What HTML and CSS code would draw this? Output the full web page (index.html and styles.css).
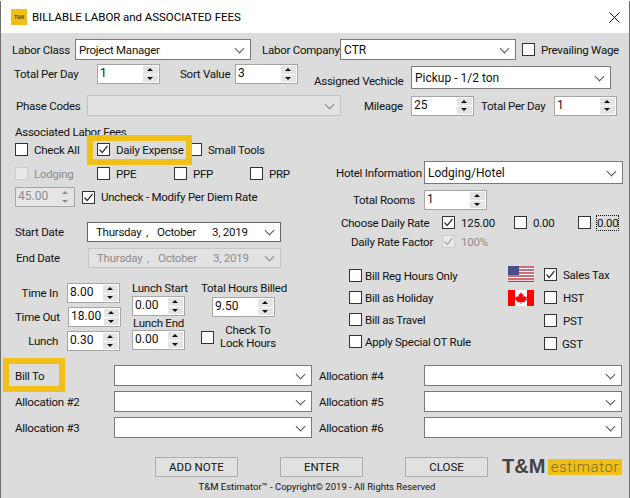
FILE: index.html
```html
<!DOCTYPE html>
<html lang="en">
<head>
    <meta charset="UTF-8">
    <title>Billable Labor and Associated Fees</title>
    <link rel="stylesheet" href="styles.css">
</head>
<body>
<div class="win">
    <header class="titlebar">
        <div class="app-icon">T&amp;M</div>
        <div class="title">BILLABLE LABOR and ASSOCIATED FEES</div>
        <svg class="close" width="11" height="11" viewBox="0 0 11 11"><path d="M0.5 0.5L10.5 10.5M10.5 0.5L0.5 10.5" stroke="#111" stroke-width="1" fill="none"/></svg>
    </header>

    <div class="row r1">
        <label class="lbl w-class">Labor Class</label>
        <div class="drop w-176"><span>Project Manager</span></div>
        <label class="lbl w-company">Labor Company</label>
        <div class="drop w-176 big"><span>CTR</span></div>
        <span class="chk ml-6"></span>
        <label class="lbl ml-6">Prevailing Wage</label>
    </div>

    <div class="row r2">
        <label class="lbl w-perday">Total Per Day</label>
        <div class="spin w-63"><span>1</span><i class="btns"><b></b><b></b></i></div>
        <label class="lbl w-sort">Sort Value</label>
        <div class="spin w-63"><span>3</span><i class="btns"><b></b><b></b></i></div>
        <label class="lbl w-vehicle">Assigned Vechicle</label>
        <div class="drop w-200 big tall"><span>Pickup - 1/2 ton</span></div>
    </div>

    <div class="row r3">
        <label class="lbl w-phase">Phase Codes</label>
        <div class="drop w-254 off"></div>
        <label class="lbl w-mileage">Mileage</label>
        <div class="spin w-63"><span>25</span><i class="btns"><b></b><b></b></i></div>
        <label class="lbl w-perday2">Total Per Day</label>
        <div class="spin w-63"><span>1</span><i class="btns"><b></b><b></b></i></div>
    </div>

    <div class="mid">
        <div class="left">
            <div class="fees-title">Associated Labor Fees</div>
            <div class="row fees-row">
                <span class="chk"></span>
                <label class="lbl w-checkall">Check All</label>
                <span class="chk on"></span>
                <label class="lbl w-daily">Daily Expense</label>
                <span class="chk"></span>
                <label class="lbl ml-6">Small Tools</label>
                <div class="mark mark-daily"></div>
            </div>
            <div class="row codes-row">
                <span class="chk faint"></span>
                <label class="lbl w-lodging muted">Lodging</label>
                <span class="chk"></span>
                <label class="lbl w-ppe">PPE</label>
                <span class="chk"></span>
                <label class="lbl w-pfp">PFP</label>
                <span class="chk"></span>
                <label class="lbl ml-6">PRP</label>
            </div>
            <div class="row diem-row">
                <div class="spin w-60 off"><span>45.00</span><i class="btns"><b></b><b></b></i></div>
                <span class="chk on ml-7"></span>
                <label class="lbl ml-6">Uncheck - Modify Per Diem Rate</label>
            </div>
            <div class="row start-row">
                <label class="lbl w-date">Start Date</label>
                <div class="drop date"><span class="d-week">Thursday</span><span class="d-comma">,</span><span class="d-month">October</span><span>3, 2019</span></div>
            </div>
            <div class="row end-row">
                <label class="lbl w-date2">End Date</label>
                <div class="drop date off"><span class="d-week">Thursday</span><span class="d-comma">,</span><span class="d-month">October</span><span>3, 2019</span></div>
            </div>

            <div class="times">
                <div class="t-col1">
                    <div class="row t-row"><label class="lbl t-in">Time In</label><div class="spin w-53"><span>8.00</span><i class="btns"><b></b><b></b></i></div></div>
                    <div class="row t-row"><label class="lbl t-out">Time Out</label><div class="spin w-53"><span>18.00</span><i class="btns"><b></b><b></b></i></div></div>
                    <div class="row t-row"><label class="lbl t-in">Lunch</label><div class="spin w-53"><span>0.30</span><i class="btns"><b></b><b></b></i></div></div>
                </div>
                <div class="t-col2">
                    <div class="lbl t-head">Lunch Start</div>
                    <div class="spin w-53"><span>0.00</span><i class="btns"><b></b><b></b></i></div>
                    <div class="lbl t-head2">Lunch End</div>
                    <div class="spin w-53"><span>0.00</span><i class="btns"><b></b><b></b></i></div>
                </div>
                <div class="t-col3">
                    <div class="lbl t-head">Total Hours Billed</div>
                    <div class="spin w-63 t-total"><span>9.50</span><i class="btns"><b></b><b></b></i></div>
                    <div class="row t-lock">
                        <span class="chk"></span>
                        <label class="lbl lock-text">Check To<br>Lock Hours</label>
                    </div>
                </div>
            </div>
        </div>

        <div class="right">
            <div class="row hotel-row">
                <label class="lbl w-right">Hotel Information</label>
                <div class="drop w-199 big tall"><span>Lodging/Hotel</span></div>
            </div>
            <div class="row rooms-row">
                <label class="lbl w-right">Total Rooms</label>
                <div class="spin w-63"><span>1</span><i class="btns"><b></b><b></b></i></div>
            </div>
            <div class="row rate-row">
                <label class="lbl w-rate">Choose Daily Rate</label>
                <span class="chk on"></span>
                <label class="lbl w-r1">125.00</label>
                <span class="chk"></span>
                <label class="lbl w-r2">0.00</label>
                <span class="chk"></span>
                <label class="lbl focus">0.00</label>
            </div>
            <div class="row factor-row">
                <label class="lbl w-factor">Daily Rate Factor</label>
                <span class="chk on faint"></span>
                <label class="lbl ml-6 muted">100%</label>
            </div>
            <div class="bills">
                <div class="bill-list">
                    <div class="row bill"><span class="chk"></span><label class="lbl ml-3">Bill Reg Hours Only</label></div>
                    <div class="row bill"><span class="chk"></span><label class="lbl ml-3">Bill as Holiday</label></div>
                    <div class="row bill"><span class="chk"></span><label class="lbl ml-3">Bill as Travel</label></div>
                    <div class="row bill"><span class="chk"></span><label class="lbl ml-3">Apply Special OT Rule</label></div>
                </div>
                <div class="flags">
                    <svg width="26" height="16" viewBox="0 0 26 16">
                        <rect width="26" height="16" fill="#fff"/>
                        <path d="M0 1H26M0 4H26M0 7H26M0 10H26M0 13H26M0 15.5H26" stroke="#b4404c" stroke-width="1.4"/>
                        <rect width="11" height="9" fill="#4a4f8c"/>
                    </svg>
                    <svg width="26" height="16" viewBox="0 0 26 16">
                        <rect width="26" height="16" fill="#fff"/>
                        <rect width="7" height="16" fill="#f00"/>
                        <rect x="19" width="7" height="16" fill="#f00"/>
                        <path d="M13 2L14.2 4.4L15.6 3.8L15 7L16.4 5.8L17 7L19 6.8L18.4 8.8L19 9.4L16.4 11.4L16.8 12.4L13.4 12V14H12.6V12L9.2 12.4L9.6 11.4L7 9.4L7.6 8.8L7 6.8L9 7L9.6 5.8L11 7L10.4 3.8L11.8 4.4Z" fill="#f00"/>
                    </svg>
                </div>
                <div class="taxes">
                    <div class="row tax"><span class="chk on"></span><label class="lbl ml-6">Sales Tax</label></div>
                    <div class="row tax"><span class="chk"></span><label class="lbl ml-6">HST</label></div>
                    <div class="row tax"><span class="chk"></span><label class="lbl ml-6">PST</label></div>
                    <div class="row tax"><span class="chk"></span><label class="lbl ml-5">GST</label></div>
                </div>
            </div>
        </div>
    </div>

    <div class="alloc">
        <div class="row"><label class="lbl a-left">Bill To</label><div class="drop w-198"></div><label class="lbl a-right">Allocation #4</label><div class="drop w-198"></div></div>
        <div class="row"><label class="lbl a-left">Allocation #2</label><div class="drop w-198"></div><label class="lbl a-right">Allocation #5</label><div class="drop w-198"></div></div>
        <div class="row"><label class="lbl a-left">Allocation #3</label><div class="drop w-198"></div><label class="lbl a-right">Allocation #6</label><div class="drop w-198"></div></div>
        <div class="mark mark-bill"></div>
    </div>

    <div class="row actions">
        <button class="btn">ADD NOTE</button>
        <button class="btn">ENTER</button>
        <button class="btn">CLOSE</button>
        <div class="logo"><span class="logo-tm">T&amp;M</span><span class="logo-est">estimator</span></div>
    </div>
    <footer class="copy">T&amp;M Estimator&trade; - Copyright&copy; 2019 - All Rights Reserved</footer>
</div>
</body>
</html>
```

FILE: styles.css
```css
* {
    margin: 0;
    padding: 0;
    box-sizing: border-box;
}

body {
    width: 630px;
    height: 498px;
    overflow: hidden;
    font-family: Roboto, "Liberation Sans", sans-serif;
    font-size: 11.5px;
    letter-spacing: -0.25px;
    color: #111;
}

.win {
    position: relative;
    width: 630px;
    height: 498px;
    background-color: #dcdcdc;
    box-shadow: inset 0 0 0 1px #6d6d6d;
}

.titlebar {
    height: 32px;
    margin: 1px 1px 0;
    display: flex;
    align-items: center;
    background-color: #fff;
}

.app-icon {
    width: 16px;
    height: 16px;
    margin-left: 10px;
    background-color: #f0c018;
    color: #6b5a1e;
    font-size: 5px;
    font-weight: 700;
    line-height: 16px;
    text-align: center;
}

.title {
    margin-left: 5px;
    font-size: 11.5px;
    letter-spacing: -0.05px;
    color: #000;
    white-space: nowrap;
}

.close {
    margin-left: auto;
    margin-right: 9px;
}

.row {
    display: flex;
    align-items: center;
}

.lbl {
    flex: none;
    white-space: nowrap;
    line-height: 14px;
}

.muted {
    color: #8d8d8d;
}

/* checkbox */
.chk {
    flex: none;
    width: 13px;
    height: 13px;
    border: 1px solid #333;
    background-color: #fff;
}

.chk.on {
    background: #fff url("data:image/svg+xml,%3Csvg xmlns='http://www.w3.org/2000/svg' width='11' height='11'%3E%3Cpath d='M1.5 5.5L4.2 8.5L9.5 2' stroke='%23333' stroke-width='1.2' fill='none'/%3E%3C/svg%3E") no-repeat center;
}

.chk.faint {
    border-color: #ccc;
    background-color: #e9e9e9;
}

.chk.on.faint {
    background-image: url("data:image/svg+xml,%3Csvg xmlns='http://www.w3.org/2000/svg' width='11' height='11'%3E%3Cpath d='M1.5 5.5L4.2 8.5L9.5 2' stroke='%23aaa' stroke-width='1.2' fill='none'/%3E%3C/svg%3E");
}

/* combo box */
.drop {
    position: relative;
    flex: none;
    height: 21px;
    display: flex;
    align-items: center;
    padding-left: 3px;
    border: 1px solid #7a7a7a;
    background-color: #fff;
}

.drop::after {
    content: "";
    position: absolute;
    right: 7px;
    top: 50%;
    width: 6px;
    height: 6px;
    margin-top: -5px;
    border-right: 1px solid #555;
    border-bottom: 1px solid #555;
    transform: rotate(45deg);
}

.drop.big {
    font-size: 12px;
    letter-spacing: 0;
}

.drop.tall {
    height: 23px;
}

.drop.off {
    border-color: #c4c4c4;
    background-color: #e2e2e2;
    color: #8d8d8d;
}

.drop.off::after {
    border-color: #888;
}

/* number box */
.spin {
    flex: none;
    height: 20px;
    display: flex;
    justify-content: space-between;
    padding: 1px 1px 1px 2px;
    border: 1px solid #a6a6a6;
    background-color: #fff;
    font-size: 12px;
    letter-spacing: 0;
    line-height: 15px;
}

.btns {
    width: 15px;
    display: flex;
    flex-direction: column;
    gap: 1px;
    font-style: normal;
}

.btns b {
    flex: 1;
    position: relative;
    background-color: #e4e4e4;
}

.btns b::after {
    content: "";
    position: absolute;
    left: 4px;
    top: 2px;
    border-left: 3px solid transparent;
    border-right: 3px solid transparent;
    border-bottom: 3px solid #111;
}

.btns b + b::after {
    border-bottom: 0;
    border-top: 3px solid #111;
}

.spin.off {
    background-color: #e6e6e6;
    color: #8d8d8d;
}

.spin.off .btns b::after {
    border-bottom-color: #8d8d8d;
    border-top-color: #8d8d8d;
}

.w-53 { width: 53px; }
.w-60 { width: 60px; }
.w-63 { width: 63px; }
.w-176 { width: 176px; }
.w-198 { width: 198px; }
.w-199 { width: 199px; }
.w-200 { width: 200px; }
.w-254 { width: 254px; }

.ml-3 { margin-left: 3px; }
.ml-5 { margin-left: 5px; }
.ml-6 { margin-left: 6px; }
.ml-7 { margin-left: 7px; }

/* top rows */
.r1 {
    margin-top: 6px;
    padding-left: 12px;
    height: 21px;
}

.w-class { width: 63px; }
.w-company { width: 78px; margin-left: 11px; }

.r2 {
    margin-top: 4px;
    padding-left: 14px;
    height: 25px;
    align-items: flex-start;
}

.r2 .lbl { margin-top: 3px; }
.r2 .drop { margin-top: 2px; }

.w-perday { width: 83px; }
.w-sort { width: 55px; margin-left: 20px; }
.r2 .w-vehicle { width: 97px; margin-left: 16px; margin-top: 10px; }

.r3 {
    margin-top: 6px;
    padding-left: 16px;
    height: 21px;
}

.w-phase { width: 71px; }
.w-mileage { width: 47px; margin-left: 23px; }
.w-perday2 { width: 73px; margin-left: 7px; }

/* middle */
.mid {
    display: flex;
    margin-top: 9px;
}

.left {
    width: 336px;
    padding-left: 15px;
    flex: none;
}

.fees-title {
    height: 14px;
    line-height: 14px;
}

.fees-row {
    position: relative;
    margin-top: 4px;
    height: 13px;
}

.mark {
    position: absolute;
    border: 6px solid #f0c018;
}

.mark-daily {
    left: 72px;
    top: -8px;
    width: 105px;
    height: 30px;
}

.w-checkall { width: 63px; margin-left: 6px; }
.w-daily { width: 73px; margin-left: 6px; }

.codes-row {
    margin-top: 11px;
    height: 13px;
}

.w-lodging { width: 63px; margin-left: 6px; }
.w-ppe { width: 58px; margin-left: 6px; }
.w-pfp { width: 57px; margin-left: 6px; }

.diem-row { margin-top: 7px; }

.start-row { margin-top: 15px; }
.end-row { margin-top: 6px; }

.w-date { width: 72px; }
.w-date2 { width: 73px; padding-left: 1px; }

.date {
    height: 20px;
    width: 194px;
    padding-left: 8px;
    border-color: #666;
}

.end-row .date { width: 193px; }

.d-week { width: 50px; }
.d-comma { width: 11px; }
.d-month { width: 55px; }

.times {
    display: flex;
    margin-top: 13px;
}

.t-col1 {
    width: 117px;
    padding-top: 2px;
}

.t-row {
    height: 20px;
    margin-bottom: 4px;
}

.t-in { width: 52px; padding-right: 9px; text-align: right; }
.t-out { width: 53px; padding-right: 9px; text-align: right; }

.t-col2 {
    width: 69px;
}

.t-head {
    height: 15px;
    line-height: 14px;
}

.t-head2 {
    height: 14px;
    line-height: 14px;
    padding-left: 1px;
}

.t-total {
    margin: 1px 0 0 11px;
}

.t-lock {
    margin-top: 7px;
    height: 26px;
}

.lock-text {
    width: 56px;
    margin-left: 6px;
    line-height: 13px;
    text-align: center;
}

/* right column */
.right {
    margin-top: 36px;
}

.hotel-row { height: 23px; }
.w-right { width: 79px; margin-right: 9px; text-align: right; }

.rooms-row { margin-top: 6px; }

.rate-row {
    margin-top: 6px;
    height: 13px;
    padding-left: 5px;
}

.w-rate { width: 101px; }
.w-r1 { width: 53px; margin-left: 6px; }
.w-r2 { width: 45px; margin-left: 6px; }

.focus {
    margin-left: 6px;
    outline: 1px dotted #111;
}

.factor-row {
    margin-top: 6px;
    height: 13px;
    padding-left: 15px;
}

.w-factor { width: 91px; }

.bills {
    display: flex;
    margin-top: 18px;
    padding-left: 13px;
}

.bill-list {
    width: 159px;
    padding-top: 3px;
}

.bill {
    height: 13px;
    margin-bottom: 9px;
}

.flags {
    width: 36px;
    display: flex;
    flex-direction: column;
    gap: 8px;
}

.taxes {
    padding-top: 2px;
}

.tax {
    height: 13px;
    margin-bottom: 10px;
}

/* allocations */
.alloc {
    position: absolute;
    left: 15px;
    top: 364px;
    width: 607px;
    display: flex;
    flex-direction: column;
    gap: 5px;
}

.a-left { width: 99px; }
.a-right { width: 105px; margin-left: 7px; }

.mark-bill {
    left: -12px;
    top: -7px;
    width: 62px;
    height: 34px;
}

/* bottom */
.actions {
    position: absolute;
    left: 155px;
    top: 454px;
    gap: 42px;
}

.btn {
    width: 83px;
    height: 20px;
    border: 1px solid #adadad;
    background-color: #e1e1e1;
    font-family: Roboto, "Liberation Sans", sans-serif;
    font-size: 11.5px;
    color: #111;
}

.logo {
    display: flex;
    align-items: center;
    margin-left: -28px;
    letter-spacing: 0;
}

.logo-tm {
    width: 46px;
    font-family: "Liberation Sans", sans-serif;
    font-size: 20px;
    font-weight: 700;
    color: #444;
}

.logo-est {
    width: 74px;
    height: 16px;
    background-color: #f0c018;
    border-top: 1px solid #bbb;
    color: #7b6a2a;
    font-size: 15px;
    font-weight: 300;
    letter-spacing: 0.6px;
    line-height: 14px;
    text-align: center;
}

.copy {
    position: absolute;
    left: 0;
    right: 0;
    top: 479px;
    padding-left: 4px;
    font-size: 9.5px;
    letter-spacing: 0;
    line-height: 13px;
    text-align: center;
}
```
